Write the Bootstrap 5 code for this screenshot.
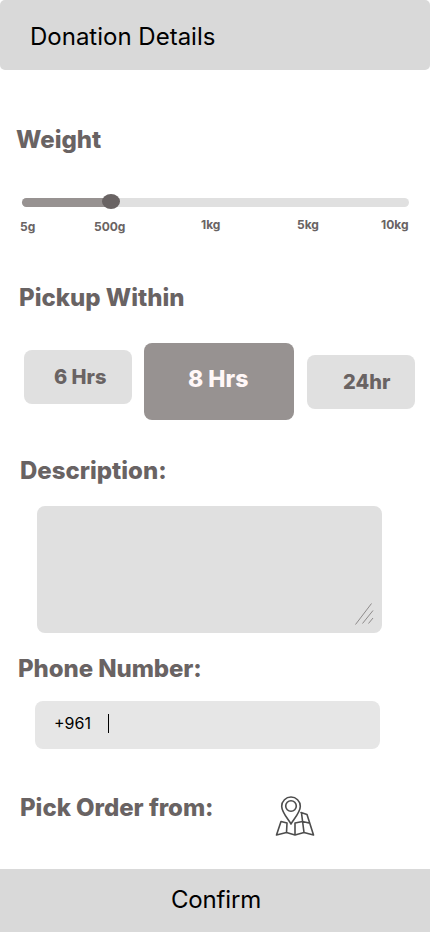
<!DOCTYPE html>
<html lang="en">
<head>
<meta charset="utf-8">
<meta name="viewport" content="width=device-width, initial-scale=1">
<title>Donation Details</title>
<link href="https://cdn.jsdelivr.net/npm/bootstrap@5.3.0/dist/css/bootstrap.min.css" rel="stylesheet">
<style>
body{font-family:Inter,sans-serif;color:#696363;background:#fff}
.screen{width:430px;height:932px}
.top-bar{height:70px;background:#d9d9d9;border-radius:5px;padding:3px 30px 0}
.bar-text{font-size:24px;line-height:29px;font-weight:400;color:#000}
.heading{font-size:24px;line-height:29px;font-weight:800}
.weight-section{height:158px;padding:55px 0 0 16px}
.slider{height:16px;margin:40px 21px 0 6px}
.track{height:9px;background:#e0e0e0}
.track-fill{height:9px;width:90px;background:#979291}
.thumb{width:18px;height:15px;left:80px;top:0;background:#696363}
.ticks{font-size:12px;line-height:15px;font-weight:700;margin:7px 0 0 4px}
.tick-a{width:74px;padding-top:2px}
.tick-b{width:107px;padding-top:2px}
.tick-c{width:96px}
.tick-d{width:84px}
.pickup-section{height:228px;padding:55px 0 0 19px}
.choices{height:77px;margin:31px 0 0 5px}
.choice{width:108px;height:54px;border:0;border-radius:8px;background:#e0e0e0;color:#696363;font-size:20px;line-height:24px;font-weight:800;padding:0 0 0 30px;text-align:left}
.choice-six{margin-top:7px}
.choice-day{margin:12px 0 0 13px;padding-left:36px}
.choice-on{width:150px;height:77px;margin-left:12px;background:#979291;color:#fff7f7;font-size:23px;padding:0 0 5px 44px}
.desc-section{height:198px;padding:0 0 0 20px}
.desc-box{width:345px;height:127px;margin:21px 0 0 17px;border-radius:8px;background:#e0e0e0;padding:0 8px 7px 0}
.phone-section{height:139px;padding-left:18px}
.phone-section .heading{letter-spacing:-.08px}
.place-section .heading{letter-spacing:-.03px}
.phone-box{width:345px;height:48px;margin:18px 0 0 17px;border-radius:8px;background:#e6e6e6;color:#000;font-size:16px;line-height:19px;padding:0 0 4px 19px}
.caret{width:1px;height:19px;background:#000;margin-left:17px}
.place-section{height:76px;padding-left:20px}
.map-icon{margin:1px 114px 0 0}
.confirm{height:63px;background:#d9d9d9;padding:0 0 3px 2px}
.confirm .bar-text{letter-spacing:-.15px}
</style>
</head>
<body>
<main class="screen d-flex flex-column overflow-hidden">
  <header class="top-bar d-flex align-items-center flex-shrink-0"><h1 class="bar-text mb-0">Donation Details</h1></header>

  <section class="weight-section flex-shrink-0">
    <h2 class="heading mb-0">Weight</h2>
    <div class="slider position-relative d-flex align-items-center">
      <div class="track rounded-pill w-100"><div class="track-fill rounded-pill"></div></div>
      <span class="thumb rounded-circle position-absolute"></span>
    </div>
    <div class="ticks d-flex">
      <span class="tick-a">5g</span><span class="tick-b">500g</span><span class="tick-c">1kg</span><span class="tick-d">5kg</span><span>10kg</span>
    </div>
  </section>

  <section class="pickup-section flex-shrink-0">
    <h2 class="heading mb-0">Pickup Within</h2>
    <div class="choices d-flex align-items-start">
      <button type="button" class="choice choice-six">6 Hrs</button>
      <button type="button" class="choice choice-on">8 Hrs</button>
      <button type="button" class="choice choice-day">24hr</button>
    </div>
  </section>

  <section class="desc-section flex-shrink-0">
    <h2 class="heading mb-0">Description:</h2>
    <div class="desc-box d-flex justify-content-end align-items-end">
      <svg width="20" height="24" viewBox="0 0 20 24" fill="none" stroke="#8e8b8b" stroke-width="1"><path d="M1.500 22.500 17.500 1.500M8.500 21.500 19 8.500M14.500 21.500 19 16"/></svg>
    </div>
  </section>

  <section class="phone-section flex-shrink-0">
    <h2 class="heading mb-0">Phone Number:</h2>
    <div class="phone-box d-flex align-items-center"><span>+961</span><span class="caret"></span></div>
  </section>

  <section class="place-section d-flex align-items-start justify-content-between flex-shrink-0">
    <h2 class="heading mb-0">Pick Order from:</h2>
    <svg class="map-icon" width="42" height="44" viewBox="0 0 42 44" fill="none" stroke="#4d4d4d" stroke-width="1.600" stroke-linejoin="round" stroke-linecap="round">
      <path d="M17 30C14.500 25.500 7.700 18.500 7.700 12.300a9.300 9.300 0 0 1 18.600 0C26.300 18.500 19.500 25.500 17 30Z"/>
      <circle cx="17" cy="12" r="5.300"/>
      <path d="M13 29 7 27.500 2.500 41 12.500 38.500 21 41 30 38.500 39.500 41 33 20.500 27 18.500M12.500 38.500 13 29M21 41V29L28.500 27.500 35 29M30 38.500 27.500 19"/>
    </svg>
  </section>

  <footer class="confirm d-flex align-items-center justify-content-center flex-shrink-0"><span class="bar-text">Confirm</span></footer>
</main>
<script src="https://cdn.jsdelivr.net/npm/bootstrap@5.3.0/dist/js/bootstrap.bundle.min.js"></script>
</body>
</html>
